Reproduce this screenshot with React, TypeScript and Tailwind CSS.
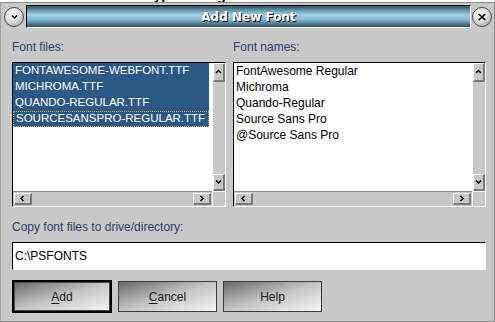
import React from 'react'

const sans = "font-['Liberation_Sans',Arial,sans-serif]"

function Chevron({ dir }: { dir: 'up' | 'down' | 'left' | 'right' }) {
  const pts = {
    up: '1,4 3.5,1.5 6,4',
    down: '1,1.5 3.5,4 6,1.5',
    left: '4.5,1 2,3.5 4.5,6',
    right: '2.5,1 5,3.5 2.5,6',
  }[dir]
  const vert = dir === 'up' || dir === 'down'
  return (
    <svg width={7} height={vert ? 6 : 7} viewBox={vert ? '0 0 7 6' : '0 0 7 7'}>
      <polyline points={pts} fill="none" stroke="#000" strokeWidth="1.4" />
    </svg>
  )
}

function ScrollBtn({ dir, className }: { dir: 'up' | 'down' | 'left' | 'right'; className: string }) {
  return (
    <div
      className={`flex items-center justify-center border-t border-l border-t-white border-l-white border-r-2 border-b-2 border-r-[#7a7a7a] border-b-[#7a7a7a] bg-[#c8c8c8] ${className}`}
    >
      <Chevron dir={dir} />
    </div>
  )
}

function ListBox({
  width,
  items,
  selected,
}: {
  width: string
  items: string[]
  selected?: boolean
}) {
  return (
    <div
      className={`flex h-[145px] flex-col border-t border-l border-t-black border-l-black border-r border-b border-r-white border-b-white ${width}`}
    >
      <div className="flex h-[128px]">
        <div className="flex-1 overflow-hidden bg-white pr-[3px]">
          {items.map((item, i) => (
            <div
              key={item}
              className={`flex h-[16px] items-center whitespace-nowrap pl-[2px] ${
                selected ? 'bg-[#2c5886] text-[11.5px] text-white' : 'text-[12px] text-black'
              } ${selected && i === items.length - 1 ? 'border border-dotted border-[#d8a860] pl-[1px]' : ''}`}
            >
              {item}
            </div>
          ))}
        </div>
        <div className="flex w-[13px] flex-col justify-between border-l border-l-white bg-[#c8c8c8]">
          <ScrollBtn dir="up" className="h-[19px] w-[12px]" />
          <ScrollBtn dir="down" className="h-[17px] w-[12px]" />
        </div>
      </div>
      <div className="flex h-[15px]">
        <div className="flex flex-1 items-center justify-between border-t border-t-[#8a8a8a] bg-[#c8c8c8] pl-[1px] pr-[1px]">
          <ScrollBtn dir="left" className="h-[12px] w-[18px]" />
          <ScrollBtn dir="right" className="h-[12px] w-[18px]" />
        </div>
        <div className="w-[13px] border-l border-t border-white bg-[#c8c8c8]" />
      </div>
    </div>
  )
}

function CircleBtn({ children }: { children: React.ReactNode }) {
  return (
    <div className="flex h-[20px] w-[20px] items-center justify-center rounded-full border border-[#4a4a4a] bg-[radial-gradient(circle_at_40%_35%,#ffffff_0%,#e4e4e4_40%,#9a9a9a_100%)]">
      {children}
    </div>
  )
}

function Button({ label, mnemonic, primary }: { label: string; mnemonic?: boolean; primary?: boolean }) {
  return (
    <div
      className={`flex items-center justify-center text-[12px] text-[#1a1a1a] bg-linear-to-br from-[#6a6a6a] via-[#c4c4c4] to-[#f6f6f6] ${
        primary
          ? 'h-[33px] w-[100px] border-2 border-black shadow-[inset_0_0_0_1px_#4a4a4a]'
          : 'ml-[6px] h-[31px] w-[99px] border border-[#3a3a3a]'
      }`}
    >
      {mnemonic ? (
        <span>
          <span className="underline underline-offset-2">{label[0]}</span>
          {label.slice(1)}
        </span>
      ) : (
        label
      )}
    </div>
  )
}

export default function App() {
  return (
    <div className={`flex h-[322px] w-[495px] flex-col overflow-hidden bg-[#c8c8c8] ${sans}`}>
      <div className="h-[2px] shrink-0 overflow-hidden bg-white">
        <div className="-mt-[12px] whitespace-nowrap pl-[8px] text-[14px] font-bold leading-[14px] text-black">
          Font Path for Adobe Type Manager Fonts:   A:\PSFONTS\PFM
        </div>
      </div>
      <div className="flex flex-1 flex-col border border-[#8a8a8a] border-l-[#a0a0a0]">
        <div className="mt-[2px] flex h-[23px] items-center pl-[3px]">
          <CircleBtn>
            <Chevron dir="down" />
          </CircleBtn>
          <div className="ml-[2px] flex h-[23px] w-[445px] items-center justify-center border-t border-l border-t-black border-l-black border-r border-b border-r-white border-b-white bg-[linear-gradient(to_bottom,#2e5264_0%,#6a9ab0_22%,#a4d0e4_42%,#8ebfd6_62%,#4d7c92_85%,#2a4a5a_100%)]">
            <span className="font-['DejaVu_Sans',sans-serif] text-[12px] font-bold text-white [text-shadow:1px_1px_0_#000]">
              Add New Font
            </span>
          </div>
          <div className="ml-[1px]">
            <CircleBtn>
              <span className="font-['DejaVu_Sans',sans-serif] text-[13px] font-bold leading-none text-black">×</span>
            </CircleBtn>
          </div>
        </div>

        <div className="pl-[11px]">
          <div className="mt-[12px] flex">
            <div className="w-[214px]">
              <div className="h-[14px] text-[12px] leading-[14px] text-[#2c3c6c]">Font files:</div>
              <div className="mt-[8px]">
                <ListBox
                  width="w-[214px]"
                  selected
                  items={[
                    'FONTAWESOME-WEBFONT.TTF',
                    'MICHROMA.TTF',
                    'QUANDO-REGULAR.TTF',
                    'SOURCESANSPRO-REGULAR.TTF',
                  ]}
                />
              </div>
            </div>
            <div className="ml-[7px] w-[253px]">
              <div className="h-[14px] text-[12px] leading-[14px] text-[#2c3c6c]">Font names:</div>
              <div className="mt-[8px]">
                <ListBox
                  width="w-[253px]"
                  items={[
                    'FontAwesome Regular',
                    'Michroma',
                    'Quando-Regular',
                    'Source Sans Pro',
                    '@Source Sans Pro',
                  ]}
                />
              </div>
            </div>
          </div>

          <div className="mt-[13px] h-[14px] text-[12px] leading-[14px] text-[#2c3c6c]">
            Copy font files to drive/directory:
          </div>
          <div className="mt-[8px] flex h-[28px] w-[474px] items-center border-t border-l border-t-black border-l-black border-r border-b border-r-white border-b-white bg-white pl-[2px] text-[12px] text-black">
            C:\PSFONTS
          </div>

          <div className="mt-[10px] flex items-center">
            <Button label="Add" mnemonic primary />
            <Button label="Cancel" mnemonic />
            <Button label="Help" />
          </div>
        </div>
      </div>
    </div>
  )
}
